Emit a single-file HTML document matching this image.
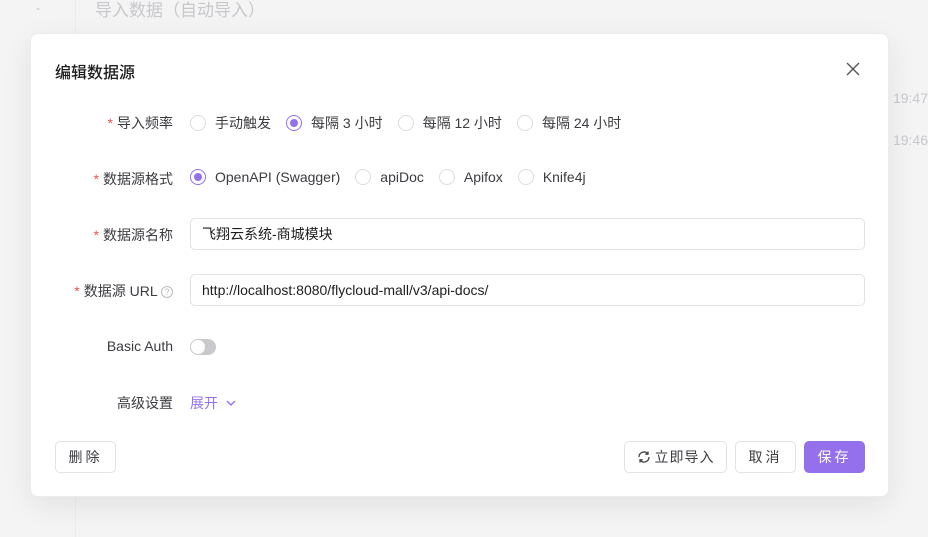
<!DOCTYPE html>
<html><head><meta charset="utf-8"><style>
*{box-sizing:border-box;margin:0;padding:0}
body{width:928px;height:537px;overflow:hidden;background:#f4f4f5;font-family:"Liberation Sans","Noto Sans CJK SC",sans-serif;position:relative;color:#1d1d1f}
.bgtitle{position:absolute;left:95px;top:-4px;font-size:17px;color:#c8c8cc}
.vline{position:absolute;left:75px;top:0;width:1px;height:537px;background:#ebebed}
.caret{position:absolute;left:36px;top:6px;color:#c5c5c8;font-size:12px}
.t{position:absolute;right:0;font-size:14px;color:#c8c8cc}
.modal{position:absolute;left:30px;top:33px;width:859px;height:464px;background:#fff;border-radius:8px;border:1px solid #ececee;box-shadow:0 8px 30px rgba(0,0,0,.08)}
.title{position:absolute;left:24px;top:25px;font-size:16px;font-weight:500;color:#1d1d1f}
.close{position:absolute;left:815px;top:28px}
.lbl{position:absolute;right:715px;font-size:14px;color:#3b3b40;white-space:nowrap}
.lbl .s{color:#f0504f;margin-right:4px}
.row{position:absolute;left:159px;display:flex;align-items:center;font-size:14px;color:#3b3b40;white-space:nowrap}
.r{width:16px;height:16px;border-radius:50%;border:1px solid #dcdce0;margin-right:9px;display:inline-block;position:relative}
.r.on{border-color:#9470ec}
.r.on:after{content:"";position:absolute;left:3px;top:3px;width:8px;height:8px;border-radius:50%;background:#9470ec}
.opt{display:flex;align-items:center;margin-right:15px}
.inp{position:absolute;left:159px;width:675px;height:32px;border:1px solid #e3e3e6;border-radius:5px;padding-left:11px;line-height:30px;font-size:14px;color:#1d1d1f}
.tog{position:absolute;left:159px;top:305px;width:26px;height:16px;border-radius:8px;background:#c9c9cc}
.tog:after{content:"";position:absolute;left:1px;top:1px;width:14px;height:14px;border-radius:50%;background:#fff}
.btn{position:absolute;top:407px;height:32px;border:1px solid #e3e3e6;border-radius:5px;font-size:14px;color:#3b3b40;display:flex;align-items:center;justify-content:center;letter-spacing:3px;background:#fff}
</style></head><body>
<div class="vline"></div>
<div class="caret">&#710;</div>
<div class="bgtitle">导入数据（自动导入）</div>
<div class="t" style="top:90px">19:47</div>
<div class="t" style="top:132px">19:46</div>
<div class="modal">
<div class="title">编辑数据源</div>
<svg class="close" width="14" height="14" viewBox="0 0 14 14"><path d="M1 1L13 13M13 1L1 13" stroke="#555" stroke-width="1.4"/></svg>
<div class="lbl" style="top:79px"><span class="s">*</span>导入频率</div>
<div class="row" style="top:79px"><span class="opt"><span class="r"></span>手动触发</span><span class="opt"><span class="r on"></span>每隔 3 小时</span><span class="opt"><span class="r"></span>每隔 12 小时</span><span class="opt"><span class="r"></span>每隔 24 小时</span></div>
<div class="lbl" style="top:135px"><span class="s">*</span>数据源格式</div>
<div class="row" style="top:135px"><span class="opt"><span class="r on"></span>OpenAPI (Swagger)</span><span class="opt"><span class="r"></span>apiDoc</span><span class="opt"><span class="r"></span>Apifox</span><span class="opt"><span class="r"></span>Knife4j</span></div>
<div class="lbl" style="top:191px"><span class="s">*</span>数据源名称</div>
<div class="inp" style="top:184px">飞翔云系统-商城模块</div>
<div class="lbl" style="top:247px"><span class="s">*</span>数据源 URL <span style="display:inline-block;width:12px;height:12px;border:1px solid #bbb;border-radius:50%;font-size:9px;line-height:10px;text-align:center;color:#bbb;vertical-align:1px">?</span></div>
<div class="inp" style="top:240px">http://localhost:8080/flycloud-mall/v3/api-docs/</div>
<div class="lbl" style="top:304px">Basic Auth</div>
<div class="tog"></div>
<div class="lbl" style="top:359px">高级设置</div>
<div class="row" style="top:359px;color:#9470ec">展开 <svg width="10" height="8" viewBox="0 0 10 8" style="margin-left:8px"><path d="M1 2L5 6L9 2" stroke="#9470ec" stroke-width="1.4" fill="none"/></svg></div>
<div class="btn" style="left:24px;width:61px">删除</div>
<div class="btn" style="left:593px;width:103px;letter-spacing:1px"><svg width="14" height="14" viewBox="0 0 14 14" style="margin-right:4px"><path d="M12 7A5 5 0 0 1 3 10M2 7A5 5 0 0 1 11 4" stroke="#444" stroke-width="1.3" fill="none"/><path d="M11 1.5V4.2H8.3M3 12.5V9.8H5.7" stroke="#444" stroke-width="1.3" fill="none"/></svg>立即导入</div>
<div class="btn" style="left:704px;width:61px">取消</div>
<div class="btn" style="left:773px;width:61px;background:#9470ec;border-color:#9470ec;color:#fff">保存</div>
</div>
</body></html>
